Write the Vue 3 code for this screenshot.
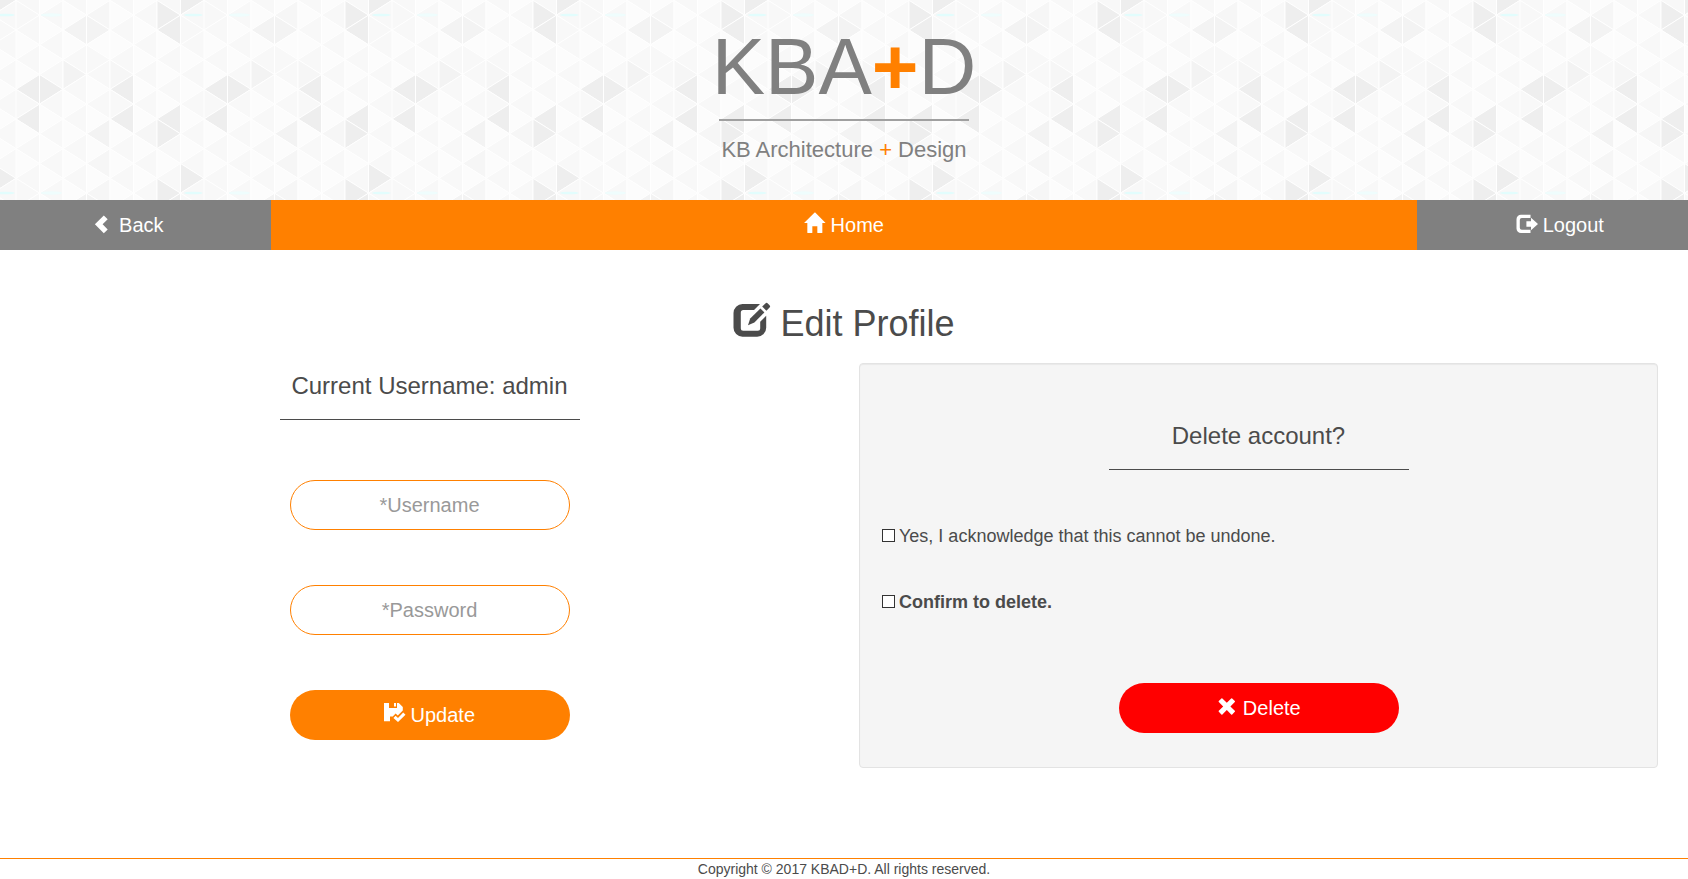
<template>
  <div class="page">
    <header class="banner">
      <svg class="banner-pattern" aria-hidden="true">
        <defs>
          <pattern
            id="triangles"
            x="16"
            y="0"
            width="188"
            height="178"
            patternUnits="userSpaceOnUse"
            viewBox="0 0 564 534"
          >
            <rect width="564" height="534" fill="#fbfbfb" />
            <polygon
              v-for="tri in triangles"
              :key="tri.key"
              :points="tri.points"
              :fill="tri.fill"
              stroke="#ffffff"
              stroke-width="3"
              stroke-linejoin="round"
            />
            <ellipse cx="106" cy="45" rx="32" ry="5" fill="#effdfd" />
            <ellipse cx="532" cy="45" rx="28" ry="4" fill="#e2fdfd" />
          </pattern>
        </defs>
        <rect width="100%" height="100%" fill="url(#triangles)" />
      </svg>
      <div class="logo">
        <div class="logo-name">KBA<span class="accent logo-plus">+</span>D</div>
        <div class="logo-tagline">KB Architecture <span class="accent">+</span> Design</div>
      </div>
    </header>

    <nav class="navbar">
      <a class="nav-side nav-back" href="#">
        <svg class="icon" viewBox="0 0 20 20" aria-hidden="true">
          <path d="M11.8 2.4L15.7 6.2L10.6 11.3L15.7 16.4L11.8 20.2L2.9 11.3Z" />
        </svg>
        Back
      </a>
      <a class="nav-home" href="#">
        <svg class="icon" viewBox="0 0 1200 1200" aria-hidden="true">
          <path
            transform="translate(0 1200) scale(1 -1)"
            d="M18 618l620 608q8 7 18.5 7t17.5 -7l608 -608q8 -8 5.5 -13t-12.5 -5h-175v-575q0 -10 -7.5 -17.5t-17.5 -7.5h-250q-10 0 -17.5 7.5t-7.5 17.5v375h-300v-375q0 -10 -7.5 -17.5t-17.5 -7.5h-250q-10 0 -17.5 7.5t-7.5 17.5v575h-175q-10 0 -12.5 5t5.5 13z"
          />
        </svg>
        Home
      </a>
      <a class="nav-side nav-logout" href="#">
        <svg class="icon" viewBox="0 0 20 20" aria-hidden="true">
          <path d="M14.5 1.8H5A4.5 4.5 0 0 0 .5 6.3V15.5A4.5 4.5 0 0 0 5 20H14.5V16.7H5.8A2 2 0 0 1 3.8 14.7V7.1A2 2 0 0 1 5.8 5.1H14.5Z" />
          <path d="M10.4 8.2H15V4.8L22 11L15 17.2V13.8H10.4Z" />
        </svg>
        Logout
      </a>
    </nav>

    <main class="content">
      <h1 class="page-title">
        <svg class="icon" viewBox="0 0 36 36" aria-hidden="true">
          <path d="M27 3H9.5A9 9 0 0 0 .5 12V26.7A9 9 0 0 0 9.5 35.7H24.2A9 9 0 0 0 33.2 26.7V14.8L27.2 20.8V27.2A2.5 2.5 0 0 1 24.7 29.7H10.3A2.5 2.5 0 0 1 7.8 27.2V11.5A2.5 2.5 0 0 1 10.3 9H21Z" />
          <path d="M15 24.2L17.2 17.6L27.4 7.4L31.4 11.4L21.4 21.4Z" />
          <path d="M29.2 5.6L32.4 2.4Q33.6 1.2 34.8 2.4L36.6 4.2Q37.8 5.4 36.6 6.6L33.4 9.8Z" />
        </svg>
        Edit Profile
      </h1>

      <div class="columns">
        <form class="profile-form" @submit.prevent>
          <h3 class="section-title">Current Username: admin</h3>
          <hr class="divider">
          <input v-model="username" class="field" type="text" placeholder="*Username" aria-label="Username">
          <input v-model="password" class="field" type="password" placeholder="*Password" aria-label="Password">
          <button class="btn btn-update" type="submit">
            <svg class="icon" viewBox="0 0 20 20" aria-hidden="true">
              <path d="M0 0H5V5H13V0H14.8L18.8 4V7.4L13.8 12.4L11.6 10.6L8.8 13.4H6V18.2H0Z" />
              <path d="M10 0H12V3.6H10Z" />
              <path d="M9.4 14.9L11.6 12.7L14 14.9L19.2 9.6L21.5 11.8L14 19Z" />
            </svg>
            Update
          </button>
        </form>

        <form class="delete-panel" @submit.prevent>
          <h3 class="section-title">Delete account?</h3>
          <hr class="divider">
          <label class="check-row">
            <input v-model="acknowledged" class="check" type="checkbox">
            Yes, I acknowledge that this cannot be undone.
          </label>
          <label class="check-row check-row-strong">
            <input v-model="confirmed" class="check" type="checkbox">
            Confirm to delete.
          </label>
          <button class="btn btn-delete" type="submit">
            <svg class="icon" viewBox="0 0 20 20" aria-hidden="true">
              <path
                d="M6.4 2.4L10.8 6.8L15.2 2.4Q15.7 1.9 16.2 2.4L18.8 5Q19.3 5.5 18.8 6L14.4 10.4L18.8 14.8Q19.3 15.3 18.8 15.8L16.2 18.4Q15.7 18.9 15.2 18.4L10.8 14L6.4 18.4Q5.9 18.9 5.4 18.4L2.8 15.8Q2.3 15.3 2.8 14.8L7.2 10.4L2.8 6Q2.3 5.5 2.8 5L5.4 2.4Q5.9 1.9 6.4 2.4Z"
              />
            </svg>
            Delete
          </button>
        </form>
      </div>
    </main>

    <footer class="footer">Copyright © 2017 KBAD+D. All rights reserved.</footer>
  </div>
</template>

<script setup>
import { ref } from 'vue';

const username = ref('');
const password = ref('');
const acknowledged = ref(false);
const confirmed = ref(false);

// One string per column of the banner tile, one digit per triangle from top to bottom
const shadeMap = [
  '111010414010',
  '010101410101',
  '103013101010',
  '023011010302',
  '101012414010',
  '010101010201',
  '144010104410',
  '411101010101'
];

const shades = ['#fcfcfc', '#f8f8f8', '#f6f6f6', '#f3f3f3', '#eeeeee'];

const columnWidth = 70.5;
const halfRow = 44.5;

// Triangles alternate between pointing left and pointing right
const triangles = [];
shadeMap.forEach((column, c) => {
  for (let row = 0; row <= column.length; row++) {
    const pointsLeft = (c + row) % 2 === 0;
    const apexX = pointsLeft ? c * columnWidth : (c + 1) * columnWidth;
    const baseX = pointsLeft ? (c + 1) * columnWidth : c * columnWidth;
    const y = row * halfRow + 1;
    triangles.push({
      key: `${c}-${row}`,
      points: `${apexX},${y} ${baseX},${y - halfRow} ${baseX},${y + halfRow}`,
      fill: shades[column[row % column.length]]
    });
  }
});
</script>

<style>
body {
  margin: 0;
  background: #ffffff;
}
</style>

<style scoped>
.page {
  display: flex;
  flex-direction: column;
  min-height: 100vh;
  font-family: "Liberation Sans", Arial, sans-serif;
  color: #4b4b4b;
}

.icon {
  width: 1em;
  height: 1em;
  margin-right: 1px;
  overflow: visible;
  fill: currentColor;
  vertical-align: -1px;
}

.accent {
  color: #ff8000;
}

.banner {
  position: relative;
  display: flex;
  justify-content: center;
  box-sizing: border-box;
  min-height: 200px;
  padding: 27px 0;
}

.banner-pattern {
  position: absolute;
  top: 0;
  left: 0;
  width: 100%;
  height: 100%;
}

.logo {
  position: relative;
  text-align: center;
  color: #808080;
}

.logo-name {
  font-size: 80px;
  line-height: 80px;
}

.logo-plus {
  font-weight: bold;
}

.logo-tagline {
  width: 250px;
  margin: 12px auto 0;
  padding-top: 16px;
  border-top: 2px solid #a0a0a0;
  font-size: 22px;
  line-height: 26px;
  white-space: nowrap;
}

.navbar {
  display: grid;
  grid-template-columns: 271fr 1146fr 271fr;
  font-size: 20px;
  line-height: 50px;
  text-align: center;
}

.navbar a {
  color: #ffffff;
  text-decoration: none;
}

.nav-side {
  background: #808080;
}

.nav-back {
  padding-right: 15px;
}

.nav-logout {
  padding-left: 15px;
}

.nav-home {
  background: #ff8000;
}

.content {
  padding: 51px 30px 30px;
}

.page-title {
  margin: 0 0 19px;
  font-size: 36px;
  font-weight: normal;
  line-height: 40px;
  text-align: center;
}

.columns {
  display: grid;
  grid-template-columns: 1fr 1fr;
  gap: 30px;
}

.profile-form,
.delete-panel {
  display: flex;
  flex-direction: column;
  align-items: center;
}

.profile-form {
  padding-top: 10px;
}

.delete-panel {
  box-sizing: border-box;
  padding: 59px 19px 34px;
  border: 1px solid #e3e3e3;
  border-radius: 4px;
  background: #f5f5f5;
  box-shadow: inset 0 1px 1px rgba(0, 0, 0, 0.05);
}

.section-title {
  margin: 0;
  font-size: 24px;
  font-weight: normal;
  line-height: 26px;
}

.divider {
  width: 300px;
  margin: 20px 0 0;
  border: 0;
  border-top: 1px solid #4b4b4b;
}

.field,
.btn {
  box-sizing: border-box;
  width: 280px;
  height: 50px;
  border-radius: 25px;
  font-family: inherit;
  font-size: 20px;
  text-align: center;
}

.field {
  margin: 60px 0 0;
  padding: 0 20px;
  border: 1px solid #ff8000;
  background: #ffffff;
  color: #4b4b4b;
}

.field::placeholder {
  color: #999999;
  opacity: 1;
}

.field + .field,
.btn-update {
  margin-top: 55px;
}

.btn {
  padding: 0;
  border: 0;
  color: #ffffff;
  cursor: pointer;
}

.btn-update {
  background: #ff8000;
}

.btn-delete {
  margin-top: 68px;
  background: #ff0000;
}

.check-row {
  display: flex;
  align-items: center;
  align-self: flex-start;
  gap: 4px;
  margin-top: 53px;
  font-size: 18px;
  line-height: 26px;
}

.check-row-strong {
  margin-top: 40px;
  font-weight: bold;
}

.check {
  flex: none;
  width: 13px;
  height: 13px;
  margin: 0 0 2px 3px;
  border: 1px solid #333333;
  background: #ffffff;
  appearance: none;
}

.check:checked {
  background: #4b4b4b;
  box-shadow: inset 0 0 0 2px #ffffff;
}

.footer {
  margin-top: auto;
  border-top: 1px solid #ff8000;
  font-size: 14px;
  line-height: 20px;
  text-align: center;
}
</style>
